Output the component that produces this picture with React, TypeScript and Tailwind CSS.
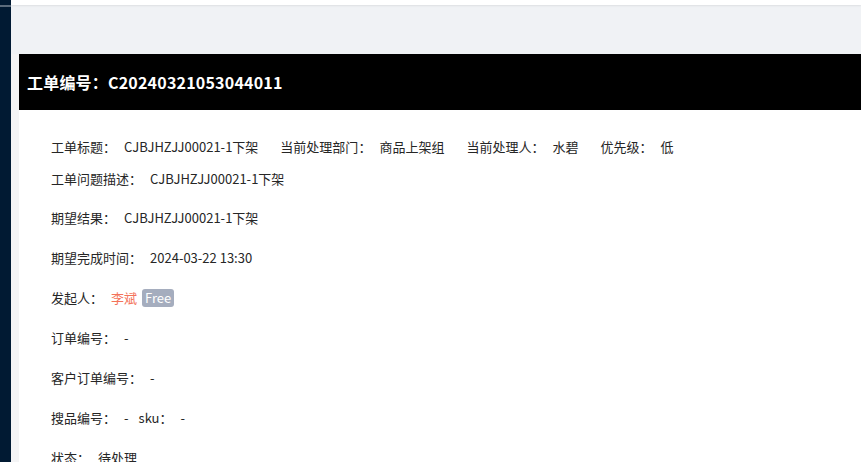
import React from 'react'

const font = { fontFamily: '"Noto Sans CJK SC", "Noto Sans", sans-serif' }

function Field({ label, children }: { label: string; children: React.ReactNode }) {
  return (
    <span className="inline-flex items-center">
      <span>{label}：</span>
      <span className="ml-2 inline-flex items-center">{children}</span>
    </span>
  )
}

export default function App() {
  return (
    <div className="flex h-[462px] w-[861px] overflow-hidden bg-[#f0f2f5]" style={font}>
      {/* sidebar */}
      <aside className="h-full w-[11px] shrink-0 bg-[#011a33]">
        <div className="mt-[5px] h-[2px] bg-[#5b6b7c]" />
      </aside>

      <main className="flex min-w-0 flex-1 flex-col">
        {/* top bar */}
        <div className="h-[5px] shrink-0 bg-white shadow-[0_1px_2px_rgba(0,0,0,0.08)]" />

        <div className="mt-[49px] flex-1 bg-[#f4f4f5] pl-2">
          <div className="w-[1000px] bg-white">
            <div className="flex h-[56px] items-center bg-black pl-2 text-[16px] font-bold tracking-[0.2px] text-white">
              工单编号：C20240321053044011
            </div>

            <div className="pl-8 pt-[27px] text-[13px] leading-5 text-[#262626]">
              <div className="mb-3 flex gap-x-[22px]">
                <Field label="工单标题">CJBJHZJJ00021-1下架</Field>
                <Field label="当前处理部门">商品上架组</Field>
                <Field label="当前处理人">水碧</Field>
                <Field label="优先级">低</Field>
              </div>
              <div className="mb-[19px]">
                <Field label="工单问题描述">CJBJHZJJ00021-1下架</Field>
              </div>
              <div className="mb-5">
                <Field label="期望结果">CJBJHZJJ00021-1下架</Field>
              </div>
              <div className="mb-5">
                <Field label="期望完成时间">2024-03-22 13:30</Field>
              </div>
              <div className="mb-5">
                <Field label="发起人">
                  <span className="text-[#f4735a]">李斌</span>
                  <span className="ml-[5px] rounded-[3px] bg-[#a5adbe] px-[3px] text-[13px] leading-[18px] text-white">
                    Free
                  </span>
                </Field>
              </div>
              <div className="mb-5">
                <Field label="订单编号">-</Field>
              </div>
              <div className="mb-5">
                <Field label="客户订单编号">-</Field>
              </div>
              <div className="mb-5 flex gap-x-[10px]">
                <Field label="搜品编号">-</Field>
                <Field label="sku">-</Field>
              </div>
              <div className="mb-5">
                <Field label="状态">待处理</Field>
              </div>
            </div>
          </div>
        </div>
      </main>
    </div>
  )
}
